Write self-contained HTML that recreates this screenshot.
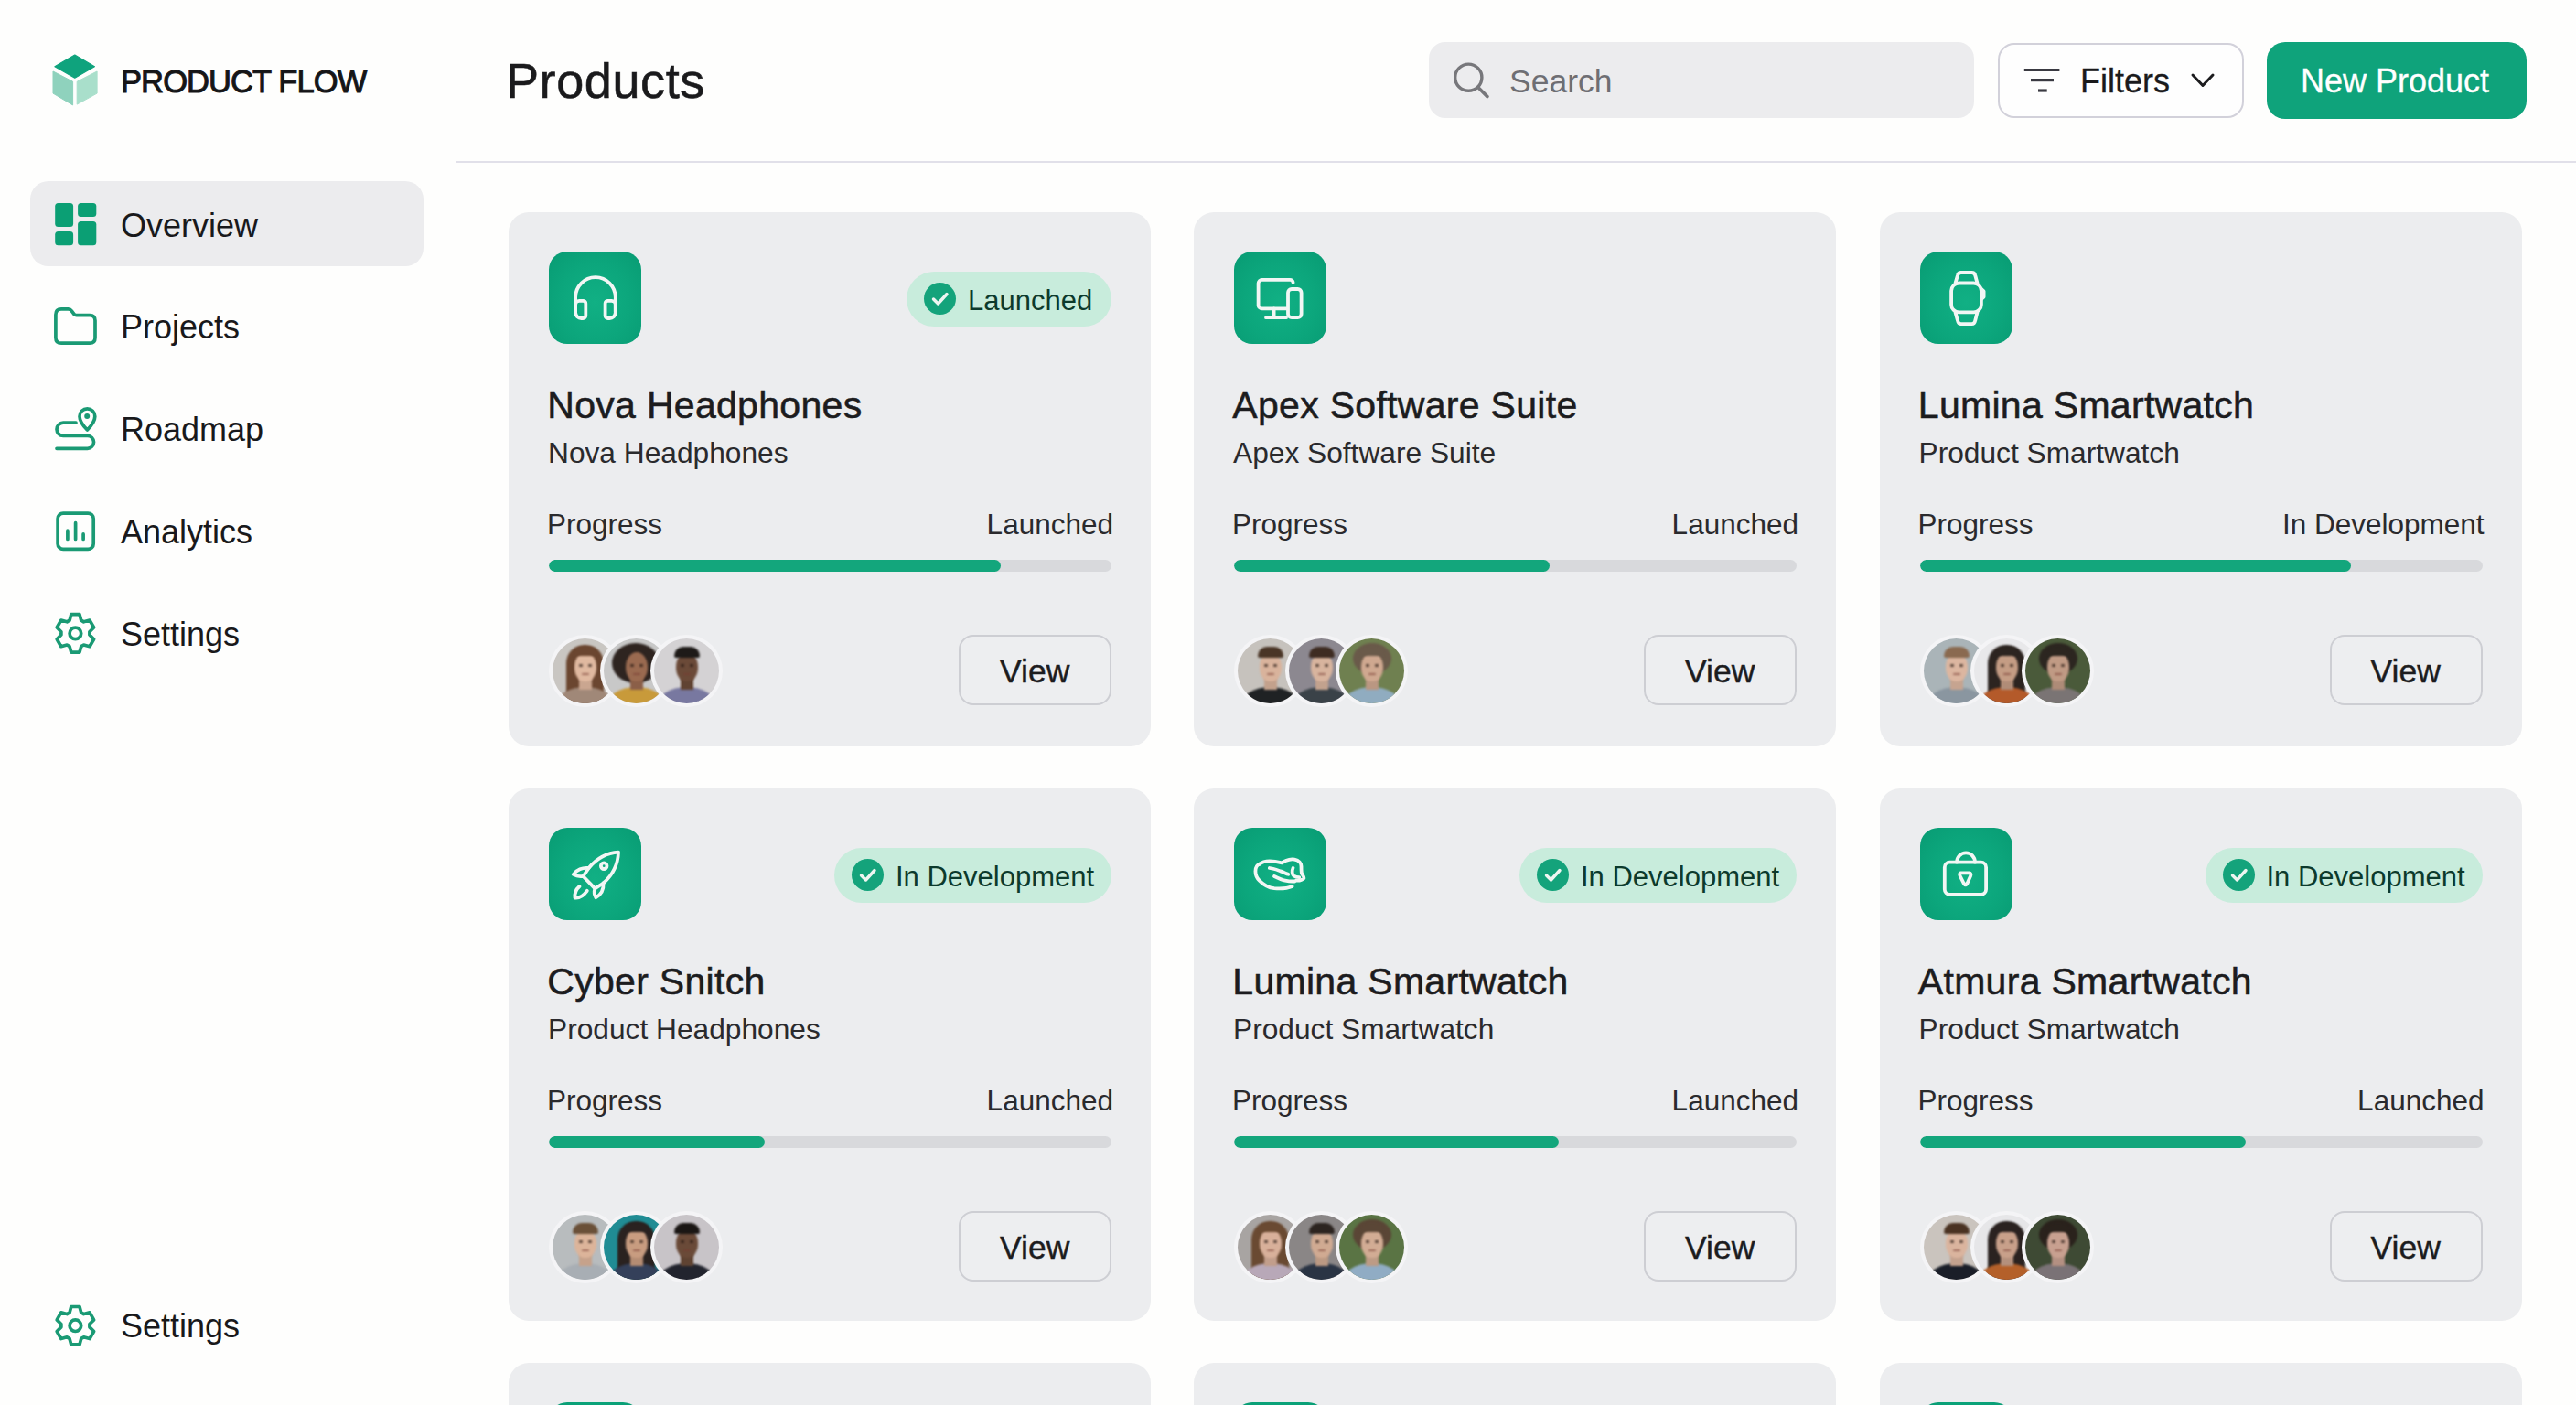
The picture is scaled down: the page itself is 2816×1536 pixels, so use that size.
<!DOCTYPE html><html><head><meta charset="utf-8"><style>
*{margin:0;padding:0;box-sizing:border-box}
html,body{width:2816px;height:1536px;overflow:hidden;background:#fefefd;font-family:"Liberation Sans",sans-serif;color:#1b1b1d}
.abs{position:absolute}
.t{position:absolute;white-space:nowrap;line-height:1}
#side{position:absolute;left:0;top:0;width:499px;height:1536px;border-right:1.5px solid #dcdbe6;background:#fefefd}
#hdr{position:absolute;left:498px;top:0;width:2318px;height:177.5px;border-bottom:2px solid #e1e0e9}
.navact{position:absolute;left:33px;top:198px;width:430px;height:93px;border-radius:20px;background:#ececee}
.card{position:absolute;width:702px;height:583px;border-radius:22px;background:#ecedef}
.ic{position:absolute;left:44px;top:43px;width:101px;height:101px;border-radius:20px;background:radial-gradient(ellipse at 50% 55%,#11b084 0%,#0ca67c 55%,#089b73 100%);overflow:hidden}
.ic svg{position:absolute;left:0;top:0}
.badge{position:absolute;right:43px;top:64.5px;height:60px;border-radius:30px;background:#c8ecdc}
.badge .chk{position:absolute;left:19px;top:12.5px;width:35px;height:35px;border-radius:50%;background:#14a37b}
.badge .bt{position:absolute;left:67px;color:#0c3a2c}
.title{font-size:41px;color:#1c1c1e;-webkit-text-stroke:0.55px #1c1c1e;letter-spacing:0.3px}
.sub{font-size:31px;color:#2a2a2d}
.lbl{font-size:31.5px;color:#2a2a2d}
.bar{position:absolute;left:44px;top:380px;width:615px;height:13px;border-radius:7px;background:#d8d9dc;overflow:hidden}
.fill{position:absolute;left:0;top:0;height:13px;border-radius:7px;background:#13a67c}
.av{position:absolute;top:462px;width:79px;height:79px;border-radius:50%;background:#f4f4f6;overflow:hidden}
.av i{position:absolute;left:4px;top:4px;width:71px;height:71px;border-radius:50%;overflow:hidden;display:block}
.av b{filter:blur(0.8px)}
.view{position:absolute;left:492px;top:462px;width:167px;height:77px;border-radius:16px;border:2px solid #cdced3;background:#edeef0}
</style></head><body>
<div id="side">
<svg class="abs" style="left:0;top:0" width="140" height="140" viewBox="0 0 140 140">
<path d="M81.8 60.1 L103.4 72.7 L81.8 85.2 L59.9 72.7 Z" fill="#0fa37d" stroke="#0fa37d" stroke-width="1.2" stroke-linejoin="round"/>
<path d="M58 78 L79.6 89.2 L79.6 114.9 L58 102.1 Z" fill="#8fd2bd" stroke="#8fd2bd" stroke-width="1" stroke-linejoin="round"/>
<path d="M84.2 89.2 L106.1 78 L106.1 102.1 L84.2 114.1 Z" fill="#a9dfcb" stroke="#a9dfcb" stroke-width="1" stroke-linejoin="round"/>
</svg>
<div class="t " style="left:132.0px;top:71.5px;font-size:34.5px;letter-spacing:-0.9px;-webkit-text-stroke:1px #151517;color:#151517">PRODUCT FLOW</div>
<div class="navact"></div>
<svg class="abs" style="left:0;top:0" width="497" height="1536" viewBox="0 0 497 1536">
<g fill="#0b9f74">
<rect x="60.2" y="222" width="19.9" height="26.1" rx="3.5"/>
<rect x="60.2" y="253.1" width="19.9" height="15.2" rx="3.5"/>
<rect x="85.1" y="222" width="20.2" height="14.9" rx="3.5"/>
<rect x="85.1" y="241.9" width="20.2" height="26.4" rx="3.5"/>
</g>
<g fill="none" stroke="#1a9a74" stroke-width="3.7" stroke-linecap="round" stroke-linejoin="round">
<path d="M60.9 344 Q60.9 337.9 67 337.9 H74.5 Q77 337.9 78.3 339.8 L81.3 343.8 Q82.1 344.6 83.6 344.6 H98 Q104 344.6 104 350.6 V369.2 Q104 375.2 98 375.2 H67 Q60.9 375.2 60.9 369.2 Z"/>
<path d="M83 462.2 H69.1 A7.1 7.1 0 0 0 69.1 476.4 H95.6 A6.95 6.95 0 0 1 95.6 490.3 H62"/>
<path d="M95.4 470 C92 466.5 87 460.5 87 455.2 A8.4 8.4 0 1 1 103.8 455.2 C103.8 460.5 98.8 466.5 95.4 470 Z"/>
<rect x="63.1" y="561.1" width="39.1" height="39.3" rx="6"/>
<path d="M73.9 580.2 V589.5 M82.6 571.7 V589.5 M91.1 583.9 V589.5"/>
<path d="M76.05 678.15 L77.81 671.70 L86.99 671.70 L88.75 678.15 L91.57 679.78 L98.03 678.08 L102.62 686.03 L97.91 690.77 L97.91 694.03 L102.62 698.77 L98.03 706.72 L91.57 705.02 L88.75 706.65 L86.99 713.10 L77.81 713.10 L76.05 706.65 L73.23 705.02 L66.77 706.72 L62.18 698.77 L66.89 694.03 L66.89 690.77 L62.18 686.03 L66.77 678.08 L73.23 679.78 Z"/>
<circle cx="82.4" cy="692.4" r="6.3"/>
<path d="M76.05 1434.95 L77.81 1428.50 L86.99 1428.50 L88.75 1434.95 L91.57 1436.58 L98.03 1434.88 L102.62 1442.83 L97.91 1447.57 L97.91 1450.83 L102.62 1455.57 L98.03 1463.52 L91.57 1461.82 L88.75 1463.45 L86.99 1469.90 L77.81 1469.90 L76.05 1463.45 L73.23 1461.82 L66.77 1463.52 L62.18 1455.57 L66.89 1450.83 L66.89 1447.57 L62.18 1442.83 L66.77 1434.88 L73.23 1436.58 Z"/>
<circle cx="82.4" cy="1449.2" r="6.3"/>
</g>
<circle cx="95.2" cy="454.9" r="3" fill="#1a9a74"/>
</svg>
<div class="t " style="left:132.0px;top:228.6px;font-size:36px;color:#19191b">Overview</div>
<div class="t " style="left:132.0px;top:339.6px;font-size:36px;color:#19191b">Projects</div>
<div class="t " style="left:132.0px;top:452.0px;font-size:36px;color:#19191b">Roadmap</div>
<div class="t " style="left:132.0px;top:564.0px;font-size:36px;color:#19191b">Analytics</div>
<div class="t " style="left:132.0px;top:676.0px;font-size:36px;color:#19191b">Settings</div>
<div class="t " style="left:132.0px;top:1432.0px;font-size:36px;color:#19191b">Settings</div>
</div>
<div id="hdr"></div>
<div class="t " style="left:553.0px;top:60.8px;font-size:54px;color:#1a1a1c;letter-spacing:0.6px;-webkit-text-stroke:0.6px #1a1a1c">Products</div>
<div class="abs" style="left:1562px;top:46px;width:596px;height:83px;border-radius:18px;background:#ececee"></div>
<svg class="abs" style="left:1580px;top:60px" width="60" height="60" viewBox="1580 60 60 60">
<circle cx="1605.3" cy="84.7" r="14.6" fill="none" stroke="#77777b" stroke-width="3.4"/>
<path d="M1615.8 95.5 L1626 105.6" stroke="#77777b" stroke-width="3.6" stroke-linecap="round"/>
</svg>
<div class="t " style="left:1650.0px;top:71.8px;font-size:35.5px;color:#6e6e73">Search</div>
<div class="abs" style="left:2184px;top:46.5px;width:269px;height:82px;border-radius:18px;border:2px solid #d2d1da;background:#fefefe"></div>
<svg class="abs" style="left:2200px;top:60px" width="240" height="60" viewBox="2200 60 240 60">
<g stroke="#3a3a42" stroke-width="3.2" stroke-linecap="butt">
<path d="M2212.8 76.5 H2251.4"/><path d="M2220 87.6 H2245"/><path d="M2228 99 H2237.7"/>
</g>
<path d="M2397 82 L2408 93.5 L2419 82" fill="none" stroke="#1c1c1e" stroke-width="3" stroke-linecap="round" stroke-linejoin="round"/>
</svg>
<div class="t " style="left:2274.0px;top:71.2px;font-size:36px;color:#1a1a1c;-webkit-text-stroke:0.3px #1a1a1c">Filters</div>
<div class="abs" style="left:2477.5px;top:46px;width:284px;height:83.5px;border-radius:20px;background:#0fa37b"></div>
<div class="t " style="left:2515.0px;top:71.2px;font-size:36px;color:#ffffff;-webkit-text-stroke:0.3px #ffffff">New Product</div>
<div class="card" style="left:556px;top:232px;height:584px">
<div class="ic"><svg width="101" height="101" viewBox="0 0 101 101"><path stroke="#f2f6f4" stroke-width="3.8" fill="none" stroke-linecap="round" stroke-linejoin="round" d="M29.1 66 V50.05 A21.85 21.85 0 0 1 72.8 50.05 V66"/><path stroke="#f2f6f4" stroke-width="3.8" fill="none" stroke-linecap="round" stroke-linejoin="round" d="M29.1 58 A4.2 4.2 0 0 1 33.3 53.8 H37.3 A3 3 0 0 1 40.3 56.8 V70 A3 3 0 0 1 37.3 73 H35.5 A6.4 6.4 0 0 1 29.1 66.6 Z"/><path stroke="#f2f6f4" stroke-width="3.8" fill="none" stroke-linecap="round" stroke-linejoin="round" d="M72.8 58 A4.2 4.2 0 0 0 68.6 53.8 H64.6 A3 3 0 0 0 61.6 56.8 V70 A3 3 0 0 0 64.6 73 H66.4 A6.4 6.4 0 0 0 72.8 66.6 Z"/></svg></div>
<div class="badge" style="width:224px"><div class="chk"><svg width="35" height="35" viewBox="0 0 35 35"><path d="M10.5 18 L15.5 23 L25 12.5" fill="none" stroke="#eef5f1" stroke-width="3.4" stroke-linecap="round" stroke-linejoin="round"/></svg></div><div class="t bt" style="top:16.7px;font-size:31px">Launched</div></div>
<div class="t title" style="left:42.3px;top:191.0px;font-size:41px;font-size:41px">Nova Headphones</div>
<div class="t sub" style="left:43.0px;top:248.0px;font-size:31.7px;font-size:31.7px">Nova Headphones</div>
<div class="t lbl" style="left:42.0px;top:325.8px;font-size:31.5px;">Progress</div>
<div class="t lbl" style="right:41px;top:325.8px;font-size:31.5px">Launched</div>
<div class="bar"><div class="fill" style="width:80.3%"></div></div>
<div class="av" style="left:44.0px"><i style="background:#c9c6c2"><b class="abs" style="left:15px;top:7px;width:41px;height:70px;border-radius:20px 20px 6px 6px;background:#6b4630"></b><b class="abs" style="left:3px;top:53px;width:65px;height:42px;border-radius:50% 50% 0 0;background:#a08878"></b><b class="abs" style="left:29px;top:42px;width:14px;height:14px;background:#e0b9a0;filter:brightness(0.9) blur(0.8px)"></b><b class="abs" style="left:24px;top:15px;width:24px;height:32px;border-radius:50% 50% 46% 46%;background:#e0b9a0"></b><b class="abs" style="left:23px;top:9px;width:26px;height:10px;border-radius:13px 13px 2px 2px;background:#6b4630"></b><b class="abs" style="left:29px;top:28px;width:4px;height:2.5px;border-radius:50%;background:rgba(40,25,20,0.75)"></b><b class="abs" style="left:39px;top:28px;width:4px;height:2.5px;border-radius:50%;background:rgba(40,25,20,0.75)"></b><b class="abs" style="left:32px;top:38px;width:8px;height:2px;border-radius:2px;background:rgba(120,60,50,0.6)"></b></i></div>
<div class="av" style="left:99.5px"><i style="background:#c8c8c8"><b class="abs" style="left:9px;top:5px;width:52px;height:44px;border-radius:50%;background:#2e2420"></b><b class="abs" style="left:3px;top:53px;width:65px;height:42px;border-radius:50% 50% 0 0;background:#c89a3a"></b><b class="abs" style="left:29px;top:42px;width:14px;height:14px;background:#9a6a50;filter:brightness(0.9) blur(0.8px)"></b><b class="abs" style="left:24px;top:15px;width:24px;height:32px;border-radius:50% 50% 46% 46%;background:#9a6a50"></b><b class="abs" style="left:29px;top:28px;width:4px;height:2.5px;border-radius:50%;background:rgba(40,25,20,0.75)"></b><b class="abs" style="left:39px;top:28px;width:4px;height:2.5px;border-radius:50%;background:rgba(40,25,20,0.75)"></b><b class="abs" style="left:32px;top:38px;width:8px;height:2px;border-radius:2px;background:rgba(120,60,50,0.6)"></b></i></div>
<div class="av" style="left:155.0px"><i style="background:#d4d2d4"><b class="abs" style="left:3px;top:53px;width:65px;height:42px;border-radius:50% 50% 0 0;background:#7878a0"></b><b class="abs" style="left:29px;top:42px;width:14px;height:14px;background:#6b4a38;filter:brightness(0.9) blur(0.8px)"></b><b class="abs" style="left:24px;top:15px;width:24px;height:32px;border-radius:50% 50% 46% 46%;background:#6b4a38"></b><b class="abs" style="left:22px;top:9px;width:28px;height:12px;border-radius:14px 14px 3px 3px;background:#1e1a18"></b><b class="abs" style="left:29px;top:28px;width:4px;height:2.5px;border-radius:50%;background:rgba(40,25,20,0.75)"></b><b class="abs" style="left:39px;top:28px;width:4px;height:2.5px;border-radius:50%;background:rgba(40,25,20,0.75)"></b><b class="abs" style="left:32px;top:38px;width:8px;height:2px;border-radius:2px;background:rgba(120,60,50,0.6)"></b></i></div>
<div class="view"></div>
<div class="t" style="left:537px;top:485.4px;font-size:35.5px;color:#1c1c1e;-webkit-text-stroke:0.4px #1c1c1e">View</div>
</div>
<div class="card" style="left:1305px;top:232px;height:584px">
<div class="ic"><svg width="101" height="101" viewBox="0 0 101 101"><path stroke="#f2f6f4" stroke-width="3.8" fill="none" stroke-linecap="round" stroke-linejoin="round" d="M64.6 34 A3.5 3.5 0 0 0 61 30.8 H30.6 A4 4 0 0 0 26.6 34.8 V58.4 A4 4 0 0 0 30.6 62.4 H57"/><path stroke="#f2f6f4" stroke-width="3.8" fill="none" stroke-linecap="round" stroke-linejoin="round" d="M43.6 62.4 V72.2 M35 72.2 H57"/><rect stroke="#f2f6f4" stroke-width="3.8" fill="none" stroke-linecap="round" stroke-linejoin="round" x="59" y="41" width="14.6" height="31.2" rx="4"/></svg></div>
<div class="t title" style="left:42.3px;top:191.0px;font-size:41px;font-size:41px">Apex Software Suite</div>
<div class="t sub" style="left:43.0px;top:248.0px;font-size:31.7px;font-size:31.7px">Apex Software Suite</div>
<div class="t lbl" style="left:42.0px;top:325.8px;font-size:31.5px;">Progress</div>
<div class="t lbl" style="right:41px;top:325.8px;font-size:31.5px">Launched</div>
<div class="bar"><div class="fill" style="width:56.1%"></div></div>
<div class="av" style="left:44.0px"><i style="background:#c6c2bd"><b class="abs" style="left:3px;top:53px;width:65px;height:42px;border-radius:50% 50% 0 0;background:#1f2224"></b><b class="abs" style="left:29px;top:42px;width:14px;height:14px;background:#d9b39c;filter:brightness(0.9) blur(0.8px)"></b><b class="abs" style="left:24px;top:15px;width:24px;height:32px;border-radius:50% 50% 46% 46%;background:#d9b39c"></b><b class="abs" style="left:22px;top:9px;width:28px;height:12px;border-radius:14px 14px 3px 3px;background:#4a3526"></b><b class="abs" style="left:29px;top:28px;width:4px;height:2.5px;border-radius:50%;background:rgba(40,25,20,0.75)"></b><b class="abs" style="left:39px;top:28px;width:4px;height:2.5px;border-radius:50%;background:rgba(40,25,20,0.75)"></b><b class="abs" style="left:32px;top:38px;width:8px;height:2px;border-radius:2px;background:rgba(120,60,50,0.6)"></b></i></div>
<div class="av" style="left:99.5px"><i style="background:#8c8890"><b class="abs" style="left:3px;top:53px;width:65px;height:42px;border-radius:50% 50% 0 0;background:#3a4248"></b><b class="abs" style="left:29px;top:42px;width:14px;height:14px;background:#d8b49e;filter:brightness(0.9) blur(0.8px)"></b><b class="abs" style="left:24px;top:15px;width:24px;height:32px;border-radius:50% 50% 46% 46%;background:#d8b49e"></b><b class="abs" style="left:22px;top:9px;width:28px;height:12px;border-radius:14px 14px 3px 3px;background:#3e2c22"></b><b class="abs" style="left:29px;top:28px;width:4px;height:2.5px;border-radius:50%;background:rgba(40,25,20,0.75)"></b><b class="abs" style="left:39px;top:28px;width:4px;height:2.5px;border-radius:50%;background:rgba(40,25,20,0.75)"></b><b class="abs" style="left:32px;top:38px;width:8px;height:2px;border-radius:2px;background:rgba(120,60,50,0.6)"></b></i></div>
<div class="av" style="left:155.0px"><i style="background:#6f8050"><b class="abs" style="left:15px;top:5px;width:42px;height:34px;border-radius:50%;background:#6a5a4a"></b><b class="abs" style="left:3px;top:53px;width:65px;height:42px;border-radius:50% 50% 0 0;background:#90acc0"></b><b class="abs" style="left:29px;top:42px;width:14px;height:14px;background:#cfa890;filter:brightness(0.9) blur(0.8px)"></b><b class="abs" style="left:24px;top:15px;width:24px;height:32px;border-radius:50% 50% 46% 46%;background:#cfa890"></b><b class="abs" style="left:23px;top:9px;width:26px;height:10px;border-radius:13px 13px 2px 2px;background:#6a5a4a"></b><b class="abs" style="left:29px;top:28px;width:4px;height:2.5px;border-radius:50%;background:rgba(40,25,20,0.75)"></b><b class="abs" style="left:39px;top:28px;width:4px;height:2.5px;border-radius:50%;background:rgba(40,25,20,0.75)"></b><b class="abs" style="left:32px;top:38px;width:8px;height:2px;border-radius:2px;background:rgba(120,60,50,0.6)"></b></i></div>
<div class="view"></div>
<div class="t" style="left:537px;top:485.4px;font-size:35.5px;color:#1c1c1e;-webkit-text-stroke:0.4px #1c1c1e">View</div>
</div>
<div class="card" style="left:2054.5px;top:232px;height:584px">
<div class="ic"><svg width="101" height="101" viewBox="0 0 101 101"><rect stroke="#f2f6f4" stroke-width="3.8" fill="none" stroke-linecap="round" stroke-linejoin="round" x="34.1" y="34.5" width="32.8" height="31.9" rx="8.5"/><path stroke="#f2f6f4" stroke-width="3.8" fill="none" stroke-linecap="round" stroke-linejoin="round" d="M38.5 34.5 L41 26 Q41.7 23 44.7 23 H56.5 Q59.5 23 60.2 26 L62.5 34.5"/><path stroke="#f2f6f4" stroke-width="3.8" fill="none" stroke-linecap="round" stroke-linejoin="round" d="M38.5 66.4 L41 75.5 Q41.7 79.2 44.7 79.2 H56.5 Q59.5 79.2 60.2 75.5 L62.5 66.4"/><path stroke="#f2f6f4" stroke-width="3.8" fill="none" stroke-linecap="round" stroke-linejoin="round" d="M66.9 41 L69.6 43.5 V49.5 L66.9 52"/></svg></div>
<div class="t title" style="left:42.3px;top:191.0px;font-size:41px;font-size:41px">Lumina Smartwatch</div>
<div class="t sub" style="left:43.0px;top:248.0px;font-size:31.7px;font-size:31.7px">Product Smartwatch</div>
<div class="t lbl" style="left:42.0px;top:325.8px;font-size:31.5px;">Progress</div>
<div class="t lbl" style="right:41px;top:325.8px;font-size:31.5px">In Development</div>
<div class="bar"><div class="fill" style="width:76.7%"></div></div>
<div class="av" style="left:44.0px"><i style="background:#aab4b8"><b class="abs" style="left:3px;top:53px;width:65px;height:42px;border-radius:50% 50% 0 0;background:#8a96a0"></b><b class="abs" style="left:29px;top:42px;width:14px;height:14px;background:#dcb6a0;filter:brightness(0.9) blur(0.8px)"></b><b class="abs" style="left:24px;top:15px;width:24px;height:32px;border-radius:50% 50% 46% 46%;background:#dcb6a0"></b><b class="abs" style="left:22px;top:9px;width:28px;height:12px;border-radius:14px 14px 3px 3px;background:#8a6a50"></b><b class="abs" style="left:29px;top:28px;width:4px;height:2.5px;border-radius:50%;background:rgba(40,25,20,0.75)"></b><b class="abs" style="left:39px;top:28px;width:4px;height:2.5px;border-radius:50%;background:rgba(40,25,20,0.75)"></b><b class="abs" style="left:32px;top:38px;width:8px;height:2px;border-radius:2px;background:rgba(120,60,50,0.6)"></b></i></div>
<div class="av" style="left:99.5px"><i style="background:#e8e8ea"><b class="abs" style="left:15px;top:7px;width:41px;height:70px;border-radius:20px 20px 6px 6px;background:#2c2420"></b><b class="abs" style="left:3px;top:53px;width:65px;height:42px;border-radius:50% 50% 0 0;background:#b45a2a"></b><b class="abs" style="left:29px;top:42px;width:14px;height:14px;background:#c49c84;filter:brightness(0.9) blur(0.8px)"></b><b class="abs" style="left:24px;top:15px;width:24px;height:32px;border-radius:50% 50% 46% 46%;background:#c49c84"></b><b class="abs" style="left:23px;top:9px;width:26px;height:10px;border-radius:13px 13px 2px 2px;background:#2c2420"></b><b class="abs" style="left:29px;top:28px;width:4px;height:2.5px;border-radius:50%;background:rgba(40,25,20,0.75)"></b><b class="abs" style="left:39px;top:28px;width:4px;height:2.5px;border-radius:50%;background:rgba(40,25,20,0.75)"></b><b class="abs" style="left:32px;top:38px;width:8px;height:2px;border-radius:2px;background:rgba(120,60,50,0.6)"></b></i></div>
<div class="av" style="left:155.0px"><i style="background:#4a5a3a"><b class="abs" style="left:15px;top:5px;width:42px;height:34px;border-radius:50%;background:#2c2620"></b><b class="abs" style="left:3px;top:53px;width:65px;height:42px;border-radius:50% 50% 0 0;background:#7a7474"></b><b class="abs" style="left:29px;top:42px;width:14px;height:14px;background:#c09a84;filter:brightness(0.9) blur(0.8px)"></b><b class="abs" style="left:24px;top:15px;width:24px;height:32px;border-radius:50% 50% 46% 46%;background:#c09a84"></b><b class="abs" style="left:23px;top:9px;width:26px;height:10px;border-radius:13px 13px 2px 2px;background:#2c2620"></b><b class="abs" style="left:29px;top:28px;width:4px;height:2.5px;border-radius:50%;background:rgba(40,25,20,0.75)"></b><b class="abs" style="left:39px;top:28px;width:4px;height:2.5px;border-radius:50%;background:rgba(40,25,20,0.75)"></b><b class="abs" style="left:32px;top:38px;width:8px;height:2px;border-radius:2px;background:rgba(120,60,50,0.6)"></b></i></div>
<div class="view"></div>
<div class="t" style="left:537px;top:485.4px;font-size:35.5px;color:#1c1c1e;-webkit-text-stroke:0.4px #1c1c1e">View</div>
</div>
<div class="card" style="left:556px;top:862px;height:582px">
<div class="ic"><svg width="101" height="101" viewBox="0 0 101 101"><g transform="translate(0 2)"><path stroke="#f2f6f4" stroke-width="3.8" fill="none" stroke-linecap="round" stroke-linejoin="round" d="M76 24.7 C62 25.5 52 32 43.6 42 L37.5 51 L50.4 64.4 L59.5 58.5 C68 51 75.5 41 76 24.7 Z"/><circle stroke="#f2f6f4" stroke-width="3.8" fill="none" stroke-linecap="round" stroke-linejoin="round" cx="60.2" cy="39.7" r="3.3"/><path stroke="#f2f6f4" stroke-width="3.8" fill="none" stroke-linecap="round" stroke-linejoin="round" d="M43.6 42 C37 41 30 44 26.8 49 C30 51 34 51.5 37.5 51"/><path stroke="#f2f6f4" stroke-width="3.8" fill="none" stroke-linecap="round" stroke-linejoin="round" d="M59.5 58.5 C60 65 57 71 51.4 74.2 C49.5 71 49.5 67 50.4 64.4"/><path stroke="#f2f6f4" stroke-width="3.8" fill="none" stroke-linecap="round" stroke-linejoin="round" d="M33.5 62 C30 65 28 70 28.5 74.5 C33 75 38 72 41.8 66.8"/></g></svg></div>
<div class="badge" style="width:303px"><div class="chk"><svg width="35" height="35" viewBox="0 0 35 35"><path d="M10.5 18 L15.5 23 L25 12.5" fill="none" stroke="#eef5f1" stroke-width="3.4" stroke-linecap="round" stroke-linejoin="round"/></svg></div><div class="t bt" style="top:16.7px;font-size:31px">In Development</div></div>
<div class="t title" style="left:42.3px;top:191.0px;font-size:41px;font-size:41px">Cyber Snitch</div>
<div class="t sub" style="left:43.0px;top:248.0px;font-size:31.7px;font-size:31.7px">Product Headphones</div>
<div class="t lbl" style="left:42.0px;top:325.8px;font-size:31.5px;">Progress</div>
<div class="t lbl" style="right:41px;top:325.8px;font-size:31.5px">Launched</div>
<div class="bar"><div class="fill" style="width:38.3%"></div></div>
<div class="av" style="left:44.0px"><i style="background:#b8bcbe"><b class="abs" style="left:3px;top:53px;width:65px;height:42px;border-radius:50% 50% 0 0;background:#a8aeb4"></b><b class="abs" style="left:29px;top:42px;width:14px;height:14px;background:#dcb49a;filter:brightness(0.9) blur(0.8px)"></b><b class="abs" style="left:24px;top:15px;width:24px;height:32px;border-radius:50% 50% 46% 46%;background:#dcb49a"></b><b class="abs" style="left:22px;top:9px;width:28px;height:12px;border-radius:14px 14px 3px 3px;background:#6a5038"></b><b class="abs" style="left:29px;top:28px;width:4px;height:2.5px;border-radius:50%;background:rgba(40,25,20,0.75)"></b><b class="abs" style="left:39px;top:28px;width:4px;height:2.5px;border-radius:50%;background:rgba(40,25,20,0.75)"></b><b class="abs" style="left:32px;top:38px;width:8px;height:2px;border-radius:2px;background:rgba(120,60,50,0.6)"></b></i></div>
<div class="av" style="left:99.5px"><i style="background:#208c94"><b class="abs" style="left:15px;top:7px;width:41px;height:70px;border-radius:20px 20px 6px 6px;background:#2a2220"></b><b class="abs" style="left:3px;top:53px;width:65px;height:42px;border-radius:50% 50% 0 0;background:#34405a"></b><b class="abs" style="left:29px;top:42px;width:14px;height:14px;background:#c89c80;filter:brightness(0.9) blur(0.8px)"></b><b class="abs" style="left:24px;top:15px;width:24px;height:32px;border-radius:50% 50% 46% 46%;background:#c89c80"></b><b class="abs" style="left:23px;top:9px;width:26px;height:10px;border-radius:13px 13px 2px 2px;background:#2a2220"></b><b class="abs" style="left:29px;top:28px;width:4px;height:2.5px;border-radius:50%;background:rgba(40,25,20,0.75)"></b><b class="abs" style="left:39px;top:28px;width:4px;height:2.5px;border-radius:50%;background:rgba(40,25,20,0.75)"></b><b class="abs" style="left:32px;top:38px;width:8px;height:2px;border-radius:2px;background:rgba(120,60,50,0.6)"></b></i></div>
<div class="av" style="left:155.0px"><i style="background:#c8c4c8"><b class="abs" style="left:3px;top:53px;width:65px;height:42px;border-radius:50% 50% 0 0;background:#22242e"></b><b class="abs" style="left:29px;top:42px;width:14px;height:14px;background:#6a4a38;filter:brightness(0.9) blur(0.8px)"></b><b class="abs" style="left:24px;top:15px;width:24px;height:32px;border-radius:50% 50% 46% 46%;background:#6a4a38"></b><b class="abs" style="left:22px;top:9px;width:28px;height:12px;border-radius:14px 14px 3px 3px;background:#1a1614"></b><b class="abs" style="left:29px;top:28px;width:4px;height:2.5px;border-radius:50%;background:rgba(40,25,20,0.75)"></b><b class="abs" style="left:39px;top:28px;width:4px;height:2.5px;border-radius:50%;background:rgba(40,25,20,0.75)"></b><b class="abs" style="left:32px;top:38px;width:8px;height:2px;border-radius:2px;background:rgba(120,60,50,0.6)"></b></i></div>
<div class="view"></div>
<div class="t" style="left:537px;top:485.4px;font-size:35.5px;color:#1c1c1e;-webkit-text-stroke:0.4px #1c1c1e">View</div>
</div>
<div class="card" style="left:1305px;top:862px;height:582px">
<div class="ic"><svg width="101" height="101" viewBox="0 0 101 101"><path stroke="#f2f6f4" stroke-width="3.8" fill="none" stroke-linecap="round" stroke-linejoin="round" d="M27.7 39.7 C22 42 22 52 27.7 57.6 C32 62 38 65.5 44 66.2 C52 66.8 59 66 63.6 64"/><path stroke="#f2f6f4" stroke-width="3.8" fill="none" stroke-linecap="round" stroke-linejoin="round" d="M27.7 39.7 C31 37 35 36.3 38.8 36.3 C44 36.3 49 37.5 52.5 38.4 C54 37 55 36.6 56.5 36 C60 34.5 64 34 66.2 34.6 C71 35.5 73.5 39 73.5 42 C73.5 45 73.5 47 73.8 49.1 C74.5 51.5 76.4 53 76.4 55.1 C74 57.5 70 57.8 67.9 57.6"/><path stroke="#f2f6f4" stroke-width="3.8" fill="none" stroke-linecap="round" stroke-linejoin="round" d="M38.8 44 C44 45 48 46 50.8 47.4 C54 48.5 57 50 59.3 50.8"/><path stroke="#f2f6f4" stroke-width="3.8" fill="none" stroke-linecap="round" stroke-linejoin="round" d="M44 53 C48 55 52 57 55.9 57.6 C59 58.3 63 58.6 66.2 58.5"/><path stroke="#f2f6f4" stroke-width="3.8" fill="none" stroke-linecap="round" stroke-linejoin="round" d="M64.5 44 C63 47 63.5 51 65.3 52.5 C67 53.8 69 54.2 71.3 54.2"/></svg></div>
<div class="badge" style="width:303px"><div class="chk"><svg width="35" height="35" viewBox="0 0 35 35"><path d="M10.5 18 L15.5 23 L25 12.5" fill="none" stroke="#eef5f1" stroke-width="3.4" stroke-linecap="round" stroke-linejoin="round"/></svg></div><div class="t bt" style="top:16.7px;font-size:31px">In Development</div></div>
<div class="t title" style="left:42.3px;top:191.0px;font-size:41px;font-size:41px">Lumina Smartwatch</div>
<div class="t sub" style="left:43.0px;top:248.0px;font-size:31.7px;font-size:31.7px">Product Smartwatch</div>
<div class="t lbl" style="left:42.0px;top:325.8px;font-size:31.5px;">Progress</div>
<div class="t lbl" style="right:41px;top:325.8px;font-size:31.5px">Launched</div>
<div class="bar"><div class="fill" style="width:57.7%"></div></div>
<div class="av" style="left:44.0px"><i style="background:#a8a4a2"><b class="abs" style="left:15px;top:7px;width:41px;height:70px;border-radius:20px 20px 6px 6px;background:#6a4a32"></b><b class="abs" style="left:3px;top:53px;width:65px;height:42px;border-radius:50% 50% 0 0;background:#b8a8b8"></b><b class="abs" style="left:29px;top:42px;width:14px;height:14px;background:#d8b09a;filter:brightness(0.9) blur(0.8px)"></b><b class="abs" style="left:24px;top:15px;width:24px;height:32px;border-radius:50% 50% 46% 46%;background:#d8b09a"></b><b class="abs" style="left:23px;top:9px;width:26px;height:10px;border-radius:13px 13px 2px 2px;background:#6a4a32"></b><b class="abs" style="left:29px;top:28px;width:4px;height:2.5px;border-radius:50%;background:rgba(40,25,20,0.75)"></b><b class="abs" style="left:39px;top:28px;width:4px;height:2.5px;border-radius:50%;background:rgba(40,25,20,0.75)"></b><b class="abs" style="left:32px;top:38px;width:8px;height:2px;border-radius:2px;background:rgba(120,60,50,0.6)"></b></i></div>
<div class="av" style="left:99.5px"><i style="background:#8a8686"><b class="abs" style="left:3px;top:53px;width:65px;height:42px;border-radius:50% 50% 0 0;background:#2a3444"></b><b class="abs" style="left:29px;top:42px;width:14px;height:14px;background:#d0aa92;filter:brightness(0.9) blur(0.8px)"></b><b class="abs" style="left:24px;top:15px;width:24px;height:32px;border-radius:50% 50% 46% 46%;background:#d0aa92"></b><b class="abs" style="left:22px;top:9px;width:28px;height:12px;border-radius:14px 14px 3px 3px;background:#2c2420"></b><b class="abs" style="left:29px;top:28px;width:4px;height:2.5px;border-radius:50%;background:rgba(40,25,20,0.75)"></b><b class="abs" style="left:39px;top:28px;width:4px;height:2.5px;border-radius:50%;background:rgba(40,25,20,0.75)"></b><b class="abs" style="left:32px;top:38px;width:8px;height:2px;border-radius:2px;background:rgba(120,60,50,0.6)"></b></i></div>
<div class="av" style="left:155.0px"><i style="background:#5a7444"><b class="abs" style="left:15px;top:5px;width:42px;height:34px;border-radius:50%;background:#5a4636"></b><b class="abs" style="left:3px;top:53px;width:65px;height:42px;border-radius:50% 50% 0 0;background:#90acc4"></b><b class="abs" style="left:29px;top:42px;width:14px;height:14px;background:#d2ac94;filter:brightness(0.9) blur(0.8px)"></b><b class="abs" style="left:24px;top:15px;width:24px;height:32px;border-radius:50% 50% 46% 46%;background:#d2ac94"></b><b class="abs" style="left:23px;top:9px;width:26px;height:10px;border-radius:13px 13px 2px 2px;background:#5a4636"></b><b class="abs" style="left:29px;top:28px;width:4px;height:2.5px;border-radius:50%;background:rgba(40,25,20,0.75)"></b><b class="abs" style="left:39px;top:28px;width:4px;height:2.5px;border-radius:50%;background:rgba(40,25,20,0.75)"></b><b class="abs" style="left:32px;top:38px;width:8px;height:2px;border-radius:2px;background:rgba(120,60,50,0.6)"></b></i></div>
<div class="view"></div>
<div class="t" style="left:537px;top:485.4px;font-size:35.5px;color:#1c1c1e;-webkit-text-stroke:0.4px #1c1c1e">View</div>
</div>
<div class="card" style="left:2054.5px;top:862px;height:582px">
<div class="ic"><svg width="101" height="101" viewBox="0 0 101 101"><g transform="translate(-1.5 0)"><rect stroke="#f2f6f4" stroke-width="3.8" fill="none" stroke-linecap="round" stroke-linejoin="round" x="28.3" y="37.7" width="45.3" height="35.1" rx="5.5"/><path stroke="#f2f6f4" stroke-width="3.8" fill="none" stroke-linecap="round" stroke-linejoin="round" d="M41.6 37.7 A9.95 10.4 0 0 1 61.5 37.7"/><path stroke="#f2f6f4" stroke-width="3.8" fill="none" stroke-linecap="round" stroke-linejoin="round" d="M46.2 48.4 H55.6 Q58.2 48.6 57.2 51.5 L53.6 59.5 Q51.6 63 49.6 59.5 L45.6 51.5 Q44.6 48.6 46.2 48.4 Z" transform="translate(-0.5 1)"/></g></svg></div>
<div class="badge" style="width:303px"><div class="chk"><svg width="35" height="35" viewBox="0 0 35 35"><path d="M10.5 18 L15.5 23 L25 12.5" fill="none" stroke="#eef5f1" stroke-width="3.4" stroke-linecap="round" stroke-linejoin="round"/></svg></div><div class="t bt" style="top:16.7px;font-size:31px">In Development</div></div>
<div class="t title" style="left:42.3px;top:191.0px;font-size:41px;font-size:41px">Atmura Smartwatch</div>
<div class="t sub" style="left:43.0px;top:248.0px;font-size:31.7px;font-size:31.7px">Product Smartwatch</div>
<div class="t lbl" style="left:42.0px;top:325.8px;font-size:31.5px;">Progress</div>
<div class="t lbl" style="right:41px;top:325.8px;font-size:31.5px">Launched</div>
<div class="bar"><div class="fill" style="width:57.9%"></div></div>
<div class="av" style="left:44.0px"><i style="background:#cac4be"><b class="abs" style="left:3px;top:53px;width:65px;height:42px;border-radius:50% 50% 0 0;background:#1a1e28"></b><b class="abs" style="left:29px;top:42px;width:14px;height:14px;background:#dab49e;filter:brightness(0.9) blur(0.8px)"></b><b class="abs" style="left:24px;top:15px;width:24px;height:32px;border-radius:50% 50% 46% 46%;background:#dab49e"></b><b class="abs" style="left:22px;top:9px;width:28px;height:12px;border-radius:14px 14px 3px 3px;background:#4a3222"></b><b class="abs" style="left:29px;top:28px;width:4px;height:2.5px;border-radius:50%;background:rgba(40,25,20,0.75)"></b><b class="abs" style="left:39px;top:28px;width:4px;height:2.5px;border-radius:50%;background:rgba(40,25,20,0.75)"></b><b class="abs" style="left:32px;top:38px;width:8px;height:2px;border-radius:2px;background:rgba(120,60,50,0.6)"></b></i></div>
<div class="av" style="left:99.5px"><i style="background:#e6e6e8"><b class="abs" style="left:15px;top:7px;width:41px;height:70px;border-radius:20px 20px 6px 6px;background:#2a2220"></b><b class="abs" style="left:3px;top:53px;width:65px;height:42px;border-radius:50% 50% 0 0;background:#b4602a"></b><b class="abs" style="left:29px;top:42px;width:14px;height:14px;background:#c8a08a;filter:brightness(0.9) blur(0.8px)"></b><b class="abs" style="left:24px;top:15px;width:24px;height:32px;border-radius:50% 50% 46% 46%;background:#c8a08a"></b><b class="abs" style="left:23px;top:9px;width:26px;height:10px;border-radius:13px 13px 2px 2px;background:#2a2220"></b><b class="abs" style="left:29px;top:28px;width:4px;height:2.5px;border-radius:50%;background:rgba(40,25,20,0.75)"></b><b class="abs" style="left:39px;top:28px;width:4px;height:2.5px;border-radius:50%;background:rgba(40,25,20,0.75)"></b><b class="abs" style="left:32px;top:38px;width:8px;height:2px;border-radius:2px;background:rgba(120,60,50,0.6)"></b></i></div>
<div class="av" style="left:155.0px"><i style="background:#3e4a34"><b class="abs" style="left:15px;top:5px;width:42px;height:34px;border-radius:50%;background:#2a221c"></b><b class="abs" style="left:3px;top:53px;width:65px;height:42px;border-radius:50% 50% 0 0;background:#7a7276"></b><b class="abs" style="left:29px;top:42px;width:14px;height:14px;background:#c8a090;filter:brightness(0.9) blur(0.8px)"></b><b class="abs" style="left:24px;top:15px;width:24px;height:32px;border-radius:50% 50% 46% 46%;background:#c8a090"></b><b class="abs" style="left:23px;top:9px;width:26px;height:10px;border-radius:13px 13px 2px 2px;background:#2a221c"></b><b class="abs" style="left:29px;top:28px;width:4px;height:2.5px;border-radius:50%;background:rgba(40,25,20,0.75)"></b><b class="abs" style="left:39px;top:28px;width:4px;height:2.5px;border-radius:50%;background:rgba(40,25,20,0.75)"></b><b class="abs" style="left:32px;top:38px;width:8px;height:2px;border-radius:2px;background:rgba(120,60,50,0.6)"></b></i></div>
<div class="view"></div>
<div class="t" style="left:537px;top:485.4px;font-size:35.5px;color:#1c1c1e;-webkit-text-stroke:0.4px #1c1c1e">View</div>
</div>
<div class="card" style="left:556px;top:1490px;height:582px">
<div class="ic"><svg width="101" height="101" viewBox="0 0 101 101"></svg></div>
</div>
<div class="card" style="left:1305px;top:1490px;height:582px">
<div class="ic"><svg width="101" height="101" viewBox="0 0 101 101"></svg></div>
</div>
<div class="card" style="left:2054.5px;top:1490px;height:582px">
<div class="ic"><svg width="101" height="101" viewBox="0 0 101 101"></svg></div>
</div>
</body></html>
